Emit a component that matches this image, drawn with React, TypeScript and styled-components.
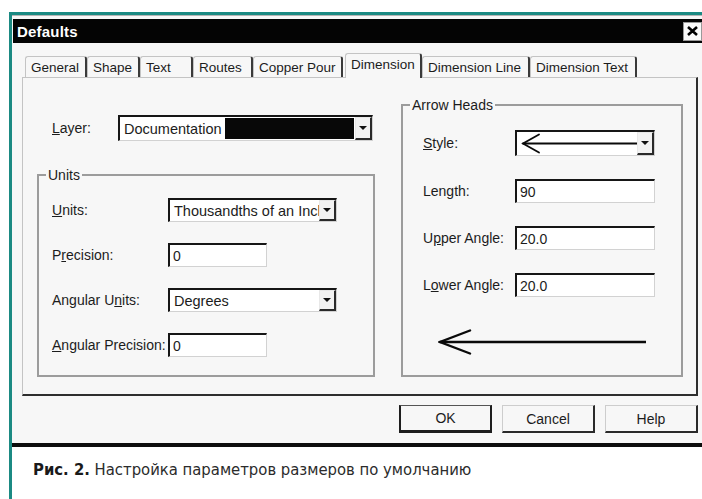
import React from "react";
import styled, { createGlobalStyle, css } from "styled-components";

const GlobalStyle = createGlobalStyle`
  html, body {
    margin: 0;
    padding: 0;
    background: #fff;
  }

  body {
    font-family: "Liberation Sans", Arial, sans-serif;
    color: #1c1c1c;
  }
`;

const Page = styled.div`
  width: 702px;
  height: 499px;
  box-sizing: border-box;
  padding: 12px 0 0 9px;
  overflow: hidden;
  background: #fff;
`;

const Frame = styled.div`
  height: 100%;
  display: flex;
  flex-direction: column;
  border-top: 3px solid #1b8a83;
  border-left: 3px solid #1b8a83;
`;

const Window = styled.div`
  display: flex;
  flex-direction: column;
  padding: 3px 0 0 1px;
  border-top: 1px solid #b5b5b5;
  border-bottom: 4px solid #0d0d0d;
  background: #f7f7f7;
`;

const TitleBar = styled.div`
  height: 24px;
  display: flex;
  align-items: center;
  justify-content: space-between;
  padding-left: 4px;
  background: #040404;
`;

const Title = styled.span`
  color: #fff;
  font-size: 15px;
  font-weight: bold;
  letter-spacing: 0.2px;
`;

const CloseButton = styled.div`
  width: 19px;
  height: 19px;
  box-sizing: border-box;
  display: flex;
  align-items: center;
  justify-content: center;
  background: #fafafa;
  border: 1px solid #9a9a9a;
`;

const Body = styled.div`
  display: flex;
  flex-direction: column;
  padding: 7px 4px 10px 9px;
`;

const TabStrip = styled.div`
  height: 27px;
  display: flex;
  align-items: flex-end;
  padding-left: 3px;
`;

const Tab = styled.div<{ $width: number; $active?: boolean }>`
  width: ${(p) => p.$width}px;
  height: 21px;
  box-sizing: border-box;
  display: flex;
  align-items: center;
  padding: 1px 0 0 5px;
  font-size: 13.5px;
  white-space: nowrap;
  border-top: 1px solid #c4c4c4;
  border-left: 1px solid #c4c4c4;
  border-right: 2px solid #3a3a3a;
  border-radius: 3px 3px 0 0;

  ${(p) =>
    p.$active &&
    css`
      height: 25px;
      margin: 0 0 -1px 2px;
      padding-bottom: 4px;
      position: relative;
      z-index: 1;
      background: #f7f7f7;
    `}
`;

const Panel = styled.div`
  width: 676px;
  height: 319px;
  box-sizing: border-box;
  display: flex;
  gap: 26px;
  padding: 0 13px 17px 14px;
  border-top: 1px solid #c4c4c4;
  border-left: 1px solid #c4c4c4;
  border-right: 2px solid #2e2e2e;
  border-bottom: 2px solid #2e2e2e;
`;

const Column = styled.div<{ $width: number; $top: number }>`
  width: ${(p) => p.$width}px;
  display: flex;
  flex-direction: column;
  padding-top: ${(p) => p.$top}px;
`;

const Group = styled.fieldset<{ $top?: number }>`
  flex: 1;
  margin: ${(p) => p.$top ?? 0}px 0 0;
  padding: 0;
  min-width: 0;
  border: 2px solid #9c9c9c;
`;

const Legend = styled.legend`
  margin-left: 7px;
  padding: 0 2px;
  font-size: 14px;
  line-height: 16px;
`;

const Fields = styled.div<{ $gap: number; $top: number; $left: number }>`
  display: flex;
  flex-direction: column;
  gap: ${(p) => p.$gap}px;
  padding: ${(p) => p.$top}px 0 0 ${(p) => p.$left}px;
`;

const Row = styled.div<{ $labelWidth: number; $indent?: number }>`
  display: flex;
  align-items: center;
  padding-left: ${(p) => p.$indent ?? 0}px;

  & > label {
    width: ${(p) => p.$labelWidth}px;
    flex-shrink: 0;
    font-size: 14px;
    white-space: nowrap;
  }
`;

const sunken = css`
  box-sizing: border-box;
  border-style: solid;
  border-width: 2px 1px 1px 2px;
  border-color: #161616 #d2d2d2 #d2d2d2 #161616;
  background: #fff;
`;

const TextBox = styled.div<{ $width: number }>`
  ${sunken};
  width: ${(p) => p.$width}px;
  height: 24px;
  display: flex;
  align-items: center;
  padding-left: 3px;
  font-size: 14px;
`;

const Combo = styled.div<{ $width: number; $height: number }>`
  ${sunken};
  width: ${(p) => p.$width}px;
  height: ${(p) => p.$height}px;
  display: flex;
`;

const ComboValue = styled.div`
  flex: 1;
  min-width: 0;
  display: flex;
  align-items: center;
  padding-left: 4px;
  overflow: hidden;
  white-space: nowrap;
  font-size: 14.5px;
`;

const Highlight = styled.div`
  flex: 1;
  align-self: stretch;
  margin: 1px 1px 1px 3px;
  background: #080808;
`;

const DropButton = styled.div`
  width: 17px;
  flex-shrink: 0;
  box-sizing: border-box;
  display: flex;
  align-items: center;
  justify-content: center;
  background: #f2f2f2;
  border-style: solid;
  border-width: 1px 2px 2px 1px;
  border-color: #e8e8e8 #2a2a2a #2a2a2a #e8e8e8;

  &::after {
    content: "";
    border-left: 4px solid transparent;
    border-right: 4px solid transparent;
    border-top: 4px solid #111;
  }
`;

const ArrowPreview = styled.div`
  margin: 32px 0 0 35px;

  svg {
    display: block;
  }
`;

const ButtonRow = styled.div`
  display: flex;
  justify-content: flex-end;
  gap: 10px;
  margin-top: 9px;
`;

const Button = styled.div<{ $default?: boolean }>`
  width: 93px;
  height: 28px;
  box-sizing: border-box;
  display: flex;
  align-items: center;
  justify-content: center;
  font-size: 14px;
  background: #f7f7f7;
  border-style: solid;
  border-width: 1px 2px 2px 1px;
  border-color: #cdcdcd #2a2a2a #2a2a2a #cdcdcd;

  ${(p) =>
    p.$default &&
    css`
      border-width: 1px 2px 3px 2px;
      border-color: #555 #1e1e1e #1e1e1e #1e1e1e;
    `}
`;

const Caption = styled.p`
  margin: 0;
  padding: 13px 0 0 21px;
  font-family: "DejaVu Sans Condensed", "DejaVu Sans", sans-serif;
  font-stretch: condensed;
  font-size: 16.5px;
  color: #2b2b2b;
  white-space: nowrap;

  b {
    color: #1a1a1a;
  }
`;

const tabs = [
  { label: "General", width: 62 },
  { label: "Shape", width: 53 },
  { label: "Text", width: 53 },
  { label: "Routes", width: 60 },
  { label: "Copper Pour", width: 90 },
  { label: "Dimension", width: 77, active: true },
  { label: "Dimension Line", width: 108 },
  { label: "Dimension Text", width: 107 },
];

const LeftArrow: React.FC<{ width: number; height: number; head: number; stroke: number }> = ({
  width,
  height,
  head,
  stroke,
}) => {
  const mid = height / 2;
  return (
    <svg width={width} height={height} viewBox={`0 0 ${width} ${height}`}>
      <g stroke="#0a0a0a" strokeWidth={stroke} strokeLinecap="round" fill="none">
        <line x1={2} y1={mid} x2={width} y2={mid} />
        <polyline points={`${head},1.5 2,${mid} ${head},${height - 1.5}`} />
      </g>
    </svg>
  );
};

export default function App() {
  return (
    <>
      <GlobalStyle />
      <Page>
        <Frame>
          <Window>
            <TitleBar>
              <Title>Defaults</Title>
              <CloseButton>
                <svg width="11" height="10" viewBox="0 0 11 10">
                  <path d="M1 1 L10 9 M10 1 L1 9" stroke="#000" strokeWidth="2.6" />
                </svg>
              </CloseButton>
            </TitleBar>

            <Body>
              <TabStrip>
                {tabs.map((t) => (
                  <Tab key={t.label} $width={t.width} $active={t.active}>
                    {t.label}
                  </Tab>
                ))}
              </TabStrip>

              <Panel>
                <Column $width={338} $top={37}>
                  <Row $labelWidth={66} $indent={15}>
                    <label>
                      <u>L</u>ayer:
                    </label>
                    <Combo $width={255} $height={26}>
                      <ComboValue>
                        Documentation
                        <Highlight />
                      </ComboValue>
                      <DropButton />
                    </Combo>
                  </Row>

                  <Group $top={26}>
                    <Legend>Units</Legend>
                    <Fields $gap={21} $top={15} $left={13}>
                      <Row $labelWidth={116}>
                        <label>
                          <u>U</u>nits:
                        </label>
                        <Combo $width={169} $height={24}>
                          <ComboValue>Thousandths of an Inch</ComboValue>
                          <DropButton />
                        </Combo>
                      </Row>
                      <Row $labelWidth={116}>
                        <label>
                          P<u>r</u>ecision:
                        </label>
                        <TextBox $width={99}>0</TextBox>
                      </Row>
                      <Row $labelWidth={116}>
                        <label>
                          Angular U<u>n</u>its:
                        </label>
                        <Combo $width={169} $height={24}>
                          <ComboValue>Degrees</ComboValue>
                          <DropButton />
                        </Combo>
                      </Row>
                      <Row $labelWidth={116}>
                        <label>
                          <u>A</u>ngular Precision:
                        </label>
                        <TextBox $width={99}>0</TextBox>
                      </Row>
                    </Fields>
                  </Group>
                </Column>

                <Column $width={282} $top={19}>
                  <Group>
                    <Legend>Arrow Heads</Legend>
                    <Fields $gap={23} $top={17} $left={20}>
                      <Row $labelWidth={92}>
                        <label>
                          <u>S</u>tyle:
                        </label>
                        <Combo $width={140} $height={26}>
                          <ComboValue>
                            <LeftArrow width={116} height={21} head={18} stroke={1.8} />
                          </ComboValue>
                          <DropButton />
                        </Combo>
                      </Row>
                      <Row $labelWidth={92}>
                        <label>Length:</label>
                        <TextBox $width={140}>90</TextBox>
                      </Row>
                      <Row $labelWidth={92}>
                        <label>
                          U<u>p</u>per Angle:
                        </label>
                        <TextBox $width={140}>20.0</TextBox>
                      </Row>
                      <Row $labelWidth={92}>
                        <label>
                          L<u>o</u>wer Angle:
                        </label>
                        <TextBox $width={140}>20.0</TextBox>
                      </Row>
                    </Fields>
                    <ArrowPreview>
                      <LeftArrow width={208} height={26} head={32} stroke={2.4} />
                    </ArrowPreview>
                  </Group>
                </Column>
              </Panel>

              <ButtonRow>
                <Button $default>OK</Button>
                <Button>Cancel</Button>
                <Button>Help</Button>
              </ButtonRow>
            </Body>
          </Window>

          <Caption>
            <b>Рис. 2.</b> Настройка параметров размеров по умолчанию
          </Caption>
        </Frame>
      </Page>
    </>
  );
}
